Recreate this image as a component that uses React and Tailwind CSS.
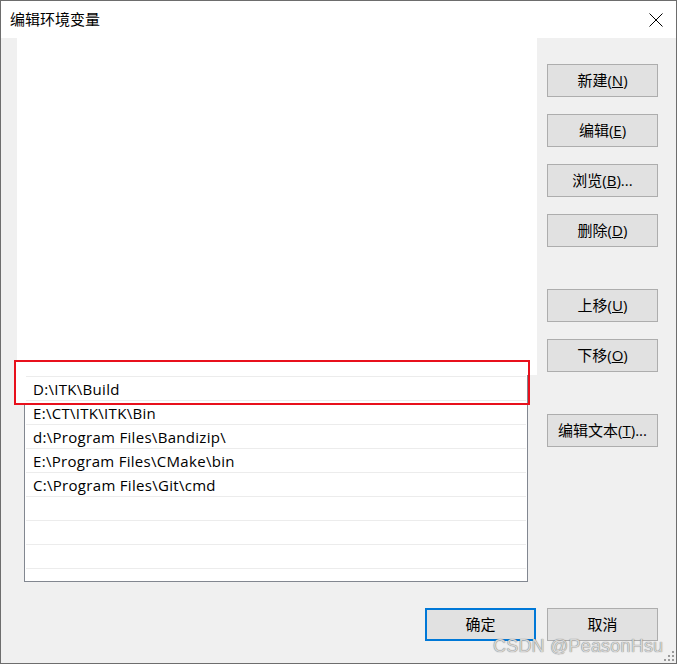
import React from "react";

const paths = [
  "D:\\ITK\\Build",
  "E:\\CT\\ITK\\ITK\\Bin",
  "d:\\Program Files\\Bandizip\\",
  "E:\\Program Files\\CMake\\bin",
  "C:\\Program Files\\Git\\cmd",
  "",
  "",
  "",
];

function Btn({ children, primary, className = "" }) {
  return (
    <div
      className={
        "w-[111px] h-[33px] flex items-center justify-center bg-[#e1e1e1] text-[15px] text-black " +
        (primary ? "border-2 border-[#0078d7] " : "border border-[#adadad] ") +
        className
      }
    >
      {children}
    </div>
  );
}

export default function App() {
  return (
    <div
      className="relative w-[677px] h-[664px] border border-[#6d6d6d] bg-[#f0f0f0] flex flex-col overflow-hidden"
      style={{ fontFamily: '"Open Sans", "Noto Sans CJK SC", sans-serif' }}
    >
      {/* title bar */}
      <div className="h-[37px] bg-white flex items-center justify-between pl-[9px] pr-[13px]">
        <span className="text-[15px] text-black">编辑环境变量</span>
        <svg width="14" height="14" viewBox="0 0 14 14">
          <path d="M0.5 0.5 L13.5 13.5 M13.5 0.5 L0.5 13.5" stroke="#000" strokeWidth="1" />
        </svg>
      </div>

      {/* body */}
      <div className="flex h-[544px]">
        <div className="w-[536px] flex flex-col">
          <div className="ml-[16px] w-[520px] h-[337px] bg-white" />
          <div className="ml-[23px] w-[504px] h-[207px] bg-white border-x border-b border-[#828790] pt-[1px]">
            <div className="mx-[1px] border-t border-[#ececec]">
              {paths.map((p, i) => (
                <div
                  key={i}
                  className="h-[24px] border-b border-[#ececec] flex items-center pl-[7px] pt-[1px] text-[15px] tracking-[0.3px] text-black"
                >
                  {p}
                </div>
              ))}
            </div>
          </div>
        </div>

        <div className="pl-[10px] pt-[26px] flex flex-col">
          <Btn>新建(<u>N</u>)</Btn>
          <Btn className="mt-[17px]">编辑(<u>E</u>)</Btn>
          <Btn className="mt-[17px]">浏览(<u>B</u>)...</Btn>
          <Btn className="mt-[17px]">删除(<u>D</u>)</Btn>
          <Btn className="mt-[42px]">上移(<u>U</u>)</Btn>
          <Btn className="mt-[17px]">下移(<u>O</u>)</Btn>
          <Btn className="mt-[42px]">编辑文本(<u>T</u>)...</Btn>
        </div>
      </div>

      {/* bottom buttons */}
      <div className="mt-[26px] flex justify-end gap-[11px] pr-[18px]">
        <Btn primary>确定</Btn>
        <Btn>取消</Btn>
      </div>

      {/* red annotation box */}
      <div className="absolute left-[12px] top-[359px] w-[516px] h-[45px] border-2 border-[#e8101c] ml-[1px]">
        <div className="absolute left-0 top-0 w-[9px] h-full bg-white" />
      </div>

      {/* watermark */}
      <div
        className="absolute left-[492px] top-[636px] text-[18px] leading-none tracking-[0.2px] text-[#d6d6d6] [text-shadow:0_0_1px_#555]"
        style={{ fontFamily: '"Liberation Sans", Arial, sans-serif' }}
      >
        CSDN @PeasonHsu
      </div>

      {/* resize grip */}
      <svg className="absolute right-[1px] bottom-[1px]" width="11" height="11" viewBox="0 0 11 11">
        <rect x="8" y="0" width="2" height="2" fill="#9a9a9a" />
        <rect x="4" y="4" width="2" height="2" fill="#9a9a9a" />
        <rect x="8" y="4" width="2" height="2" fill="#9a9a9a" />
        <rect x="0" y="8" width="2" height="2" fill="#9a9a9a" />
        <rect x="4" y="8" width="2" height="2" fill="#9a9a9a" />
        <rect x="8" y="8" width="2" height="2" fill="#9a9a9a" />
      </svg>
    </div>
  );
}
